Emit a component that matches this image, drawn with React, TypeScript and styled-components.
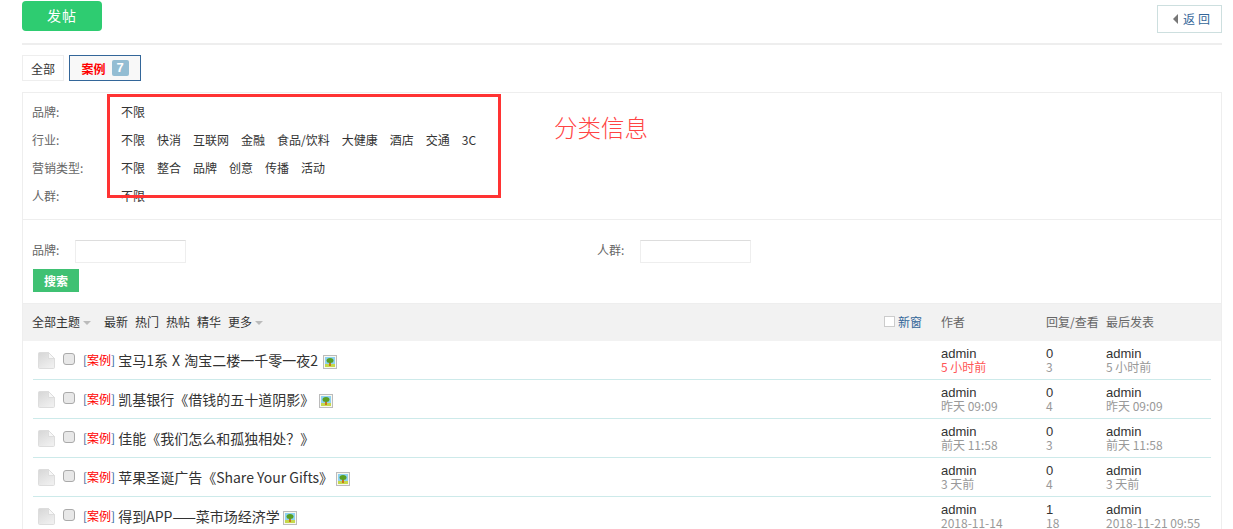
import React from 'react';
import styled, { createGlobalStyle } from 'styled-components';

const GlobalStyle = createGlobalStyle`
  html, body {
    margin: 0;
    padding: 0;
    background: #fff;
    overflow: hidden;
  }
  body {
    font: 12px/1.5 "Noto Sans CJK SC", "Liberation Sans", sans-serif;
    color: #444;
  }
`;

const Page = styled.div`
  position: relative;
  width: 1200px;
  height: 529px;
  margin-left: 22px;
  overflow: hidden;
`;

const TopBar = styled.div`
  display: flex;
  justify-content: space-between;
  height: 42px;
  padding-top: 1px;
  border-bottom: 2px solid #eee;
`;

const PostButton = styled.button`
  width: 80px;
  height: 30px;
  padding: 0 0 2px;
  border: none;
  border-radius: 4px;
  background: #2ecc71;
  color: #fff;
  font: 400 14px/28px "Noto Sans CJK SC", sans-serif;
  letter-spacing: 1px;
`;

const BackButton = styled.a`
  display: flex;
  align-items: center;
  gap: 5px;
  width: 65px;
  height: 28px;
  margin-top: 4px;
  padding-left: 15px;
  box-sizing: border-box;
  border: 1px solid #cddfdf;
  color: #369;
  font-size: 12px;
  letter-spacing: 3px;
  white-space: nowrap;
`;

const BackArrow = styled.i`
  width: 0;
  height: 0;
  border: 5px solid transparent;
  border-left: 0;
  border-right: 5px solid #777;
`;

const Tabs = styled.div`
  display: flex;
  gap: 5px;
  margin-top: 10px;
  height: 26px;
`;

const Tab = styled.a<{ $active?: boolean }>`
  display: flex;
  align-items: center;
  justify-content: center;
  gap: 6px;
  box-sizing: border-box;
  width: ${({ $active }) => ($active ? '72px' : '42px')};
  padding-top: 1px;
  border: 1px solid ${({ $active }) => ($active ? '#369' : '#eee')};
  background: ${({ $active }) => ($active ? '#f8f8f8' : '#fff')};
  color: ${({ $active }) => ($active ? '#f00' : '#333')};
  font-weight: ${({ $active }) => ($active ? 700 : 400)};
`;

const Badge = styled.span`
  width: 17px;
  height: 16px;
  margin-top: -1px;
  border-radius: 2px;
  background: #93bdd3;
  color: #fff;
  font: 700 13px/16px "Liberation Sans", sans-serif;
  text-align: center;
`;

const Panel = styled.div`
  margin-top: 11px;
  border: 1px solid #eee;
  border-bottom: 0;
`;

const FilterBlock = styled.div`
  padding: 5px 0 9px;
  border-bottom: 1px solid #eee;
`;

const FilterRow = styled.div`
  display: flex;
  height: 28px;
  align-items: center;
  padding-left: 9px;
`;

const FilterLabel = styled.span`
  width: 89px;
  color: #666;
`;

const FilterItems = styled.div`
  display: flex;
  gap: 12px;
  color: #333;
`;

const SearchBlock = styled.div`
  height: 84px;
  padding: 20px 0 0 9px;
  box-sizing: border-box;
  border-bottom: 1px solid #eee;
`;

const SearchFields = styled.div`
  display: grid;
  grid-template-columns: 565px 1fr;
`;

const SearchField = styled.label`
  display: flex;
  align-items: center;
  color: #666;
`;

const SearchLabel = styled.span`
  width: 43px;
  padding-bottom: 3px;
`;

const SearchInput = styled.input`
  width: 111px;
  height: 23px;
  padding: 0;
  box-sizing: border-box;
  border: 1px solid #eee;
  border-top-color: #ddd;
  outline: none;
`;

const SearchButton = styled.button`
  display: block;
  width: 46px;
  height: 23px;
  margin: 6px 0 0 1px;
  padding: 0;
  border: none;
  background: #3fc173;
  color: #fff;
  font: 700 12px/23px "Noto Sans CJK SC", sans-serif;
`;

const ListHeader = styled.div`
  display: flex;
  align-items: center;
  height: 37px;
  padding: 0 0 2px 9px;
  box-sizing: border-box;
  background: #f2f2f2;
`;

const HeaderLinks = styled.div`
  display: flex;
  flex: 1;
  align-items: center;
  gap: 7px;
  color: #333;
`;

const AllTopics = styled.span`
  margin-right: 6px;
`;

const Caret = styled.i`
  display: inline-block;
  width: 0;
  height: 0;
  margin-left: 3px;
  vertical-align: 2px;
  border: 4px solid transparent;
  border-top-color: #bbb;
  border-bottom: 0;
`;

const NewWindow = styled.label`
  display: flex;
  align-items: center;
  gap: 3px;
  width: 57px;
  color: #369;
`;

const SmallBox = styled.i`
  width: 9px;
  height: 9px;
  border: 1px solid #ccc;
  background: #fff;
`;

const ColAuthor = styled.div`
  width: 105px;
  color: #666;
`;

const ColCount = styled.div`
  width: 60px;
  color: #666;
  white-space: nowrap;
`;

const ColLast = styled.div`
  width: 115px;
  color: #666;
`;

const Row = styled.div`
  display: flex;
  align-items: center;
  height: 38px;
  margin: 0 10px;
  border-bottom: 1px solid #cdeaea;
`;

const Cell = styled.div<{ $w: number }>`
  width: ${({ $w }) => $w}px;
  line-height: 13px;
`;

const TitleCell = styled.div`
  display: flex;
  flex: 1;
  align-items: center;
  padding-left: 5px;
`;

const RowCheck = styled.i`
  width: 10px;
  height: 10px;
  margin: 0 8px 2px;
  border: 1px solid #aaa;
  border-radius: 3px;
  background: #e8e8e8;
`;

const Category = styled.span`
  margin-right: 3px;
  color: #369;
`;

const CategoryName = styled.span`
  color: #f00;
`;

const Title = styled.a<{ $spaced?: boolean }>`
  color: #333;
  font-size: 14px;
  word-spacing: ${({ $spaced }) => ($spaced ? '1px' : '0')};
`;

const PicIcon = styled.svg<{ $gap: number }>`
  margin: 4px 0 0 ${({ $gap }) => $gap}px;
`;

const Name = styled.div`
  color: #333;
  font: 13px/13px "Liberation Sans", sans-serif;
`;

const When = styled.div<{ $hot?: boolean }>`
  color: ${({ $hot }) => ($hot ? '#f55' : '#999')};
  font-size: 12px;
  line-height: 13px;
`;

const Annotation = styled.div`
  position: absolute;
  left: 85px;
  top: 94px;
  width: 394px;
  height: 104px;
  box-sizing: border-box;
  border: 3px solid #f33;
`;

const AnnotationText = styled.div`
  position: absolute;
  left: 532px;
  top: 109px;
  color: #f44;
  font: 300 23.5px/36px "Noto Sans CJK SC", sans-serif;
`;

const PageIcon = () => (
  <svg width="17" height="17" viewBox="0 0 17 17">
    <defs>
      <linearGradient id="pageFill" x1="0" y1="0" x2="0.6" y2="1">
        <stop offset="0" stopColor="#d6d6d6" />
        <stop offset="1" stopColor="#efefef" />
      </linearGradient>
    </defs>
    <path d="M1.5 0.5H10.5L16.5 6.5V15.5Q16.5 16.5 15.5 16.5H1.5Q0.5 16.5 0.5 15.5V1.5Q0.5 0.5 1.5 0.5Z" fill="url(#pageFill)" stroke="#ddd" />
    <path d="M10.5 0.5V6.5H16.5Z" fill="#f7f7f7" stroke="#ddd" />
  </svg>
);

const Pic = ({ gap }: { gap: number }) => (
  <PicIcon $gap={gap} width="14" height="14" viewBox="0 0 14 14">
    <rect x="0.5" y="0.5" width="13" height="13" fill="#f8f8ee" stroke="#bbb" />
    <rect x="2" y="2" width="10" height="7" fill="#8ed1f2" />
    <rect x="2" y="9" width="10" height="3" fill="#c5d84a" />
    <rect x="6" y="7" width="2" height="4" fill="#c9741f" />
    <ellipse cx="7" cy="5.5" rx="3.5" ry="2.5" fill="#5a9f22" />
  </PicIcon>
);

const filters = [
  { label: '品牌:', items: ['不限'] },
  { label: '行业:', items: ['不限', '快消', '互联网', '金融', '食品/饮料', '大健康', '酒店', '交通', '3C'] },
  { label: '营销类型:', items: ['不限', '整合', '品牌', '创意', '传播', '活动'] },
  { label: '人群:', items: ['不限'] },
];

const threads = [
  { title: '宝马1系 X 淘宝二楼一千零一夜2', spaced: true, gap: 5, when: '5 小时前', hot: true, replies: 0, views: 3, last: '5 小时前' },
  { title: '凯基银行《借钱的五十道阴影》', gap: 5, when: '昨天 09:09', replies: 0, views: 4, last: '昨天 09:09' },
  { title: '佳能《我们怎么和孤独相处?》', gap: 0, when: '前天 11:58', replies: 0, views: 3, last: '前天 11:58', noPic: true },
  { title: '苹果圣诞广告《Share Your Gifts》', gap: 3, when: '3 天前', replies: 0, views: 4, last: '3 天前' },
  { title: '得到APP——菜市场经济学', gap: 3, when: '2018-11-14', replies: 1, views: 18, last: '2018-11-21 09:55' },
];

export default function App() {
  return (
    <Page>
      <GlobalStyle />
      <TopBar>
        <PostButton>发帖</PostButton>
        <BackButton>
          <BackArrow />
          返回
        </BackButton>
      </TopBar>
      <Tabs>
        <Tab>全部</Tab>
        <Tab $active>
          案例
          <Badge>7</Badge>
        </Tab>
      </Tabs>
      <Panel>
        <FilterBlock>
          {filters.map((f) => (
            <FilterRow key={f.label}>
              <FilterLabel>{f.label}</FilterLabel>
              <FilterItems>
                {f.items.map((item) => (
                  <span key={item}>{item}</span>
                ))}
              </FilterItems>
            </FilterRow>
          ))}
        </FilterBlock>
        <SearchBlock>
          <SearchFields>
            <SearchField>
              <SearchLabel>品牌:</SearchLabel>
              <SearchInput />
            </SearchField>
            <SearchField>
              <SearchLabel>人群:</SearchLabel>
              <SearchInput />
            </SearchField>
          </SearchFields>
          <SearchButton>搜索</SearchButton>
        </SearchBlock>
        <ListHeader>
          <HeaderLinks>
            <AllTopics>
              全部主题
              <Caret />
            </AllTopics>
            <span>最新</span>
            <span>热门</span>
            <span>热帖</span>
            <span>精华</span>
            <span>
              更多
              <Caret />
            </span>
          </HeaderLinks>
          <NewWindow>
            <SmallBox />
            新窗
          </NewWindow>
          <ColAuthor>作者</ColAuthor>
          <ColCount>回复/查看</ColCount>
          <ColLast>最后发表</ColLast>
        </ListHeader>
        {threads.map((t) => (
          <Row key={t.title}>
            <TitleCell>
              <PageIcon />
              <RowCheck />
              <Category>
                [<CategoryName>案例</CategoryName>]
              </Category>
              <Title $spaced={t.spaced}>{t.title.replace('?', '？')}</Title>
              {!t.noPic && <Pic gap={t.gap} />}
            </TitleCell>
            <Cell $w={105}>
              <Name>admin</Name>
              <When $hot={t.hot}>{t.when}</When>
            </Cell>
            <Cell $w={60}>
              <Name>{t.replies}</Name>
              <When>{t.views}</When>
            </Cell>
            <Cell $w={105}>
              <Name>admin</Name>
              <When>{t.last}</When>
            </Cell>
          </Row>
        ))}
      </Panel>
      <Annotation />
      <AnnotationText>分类信息</AnnotationText>
    </Page>
  );
}
